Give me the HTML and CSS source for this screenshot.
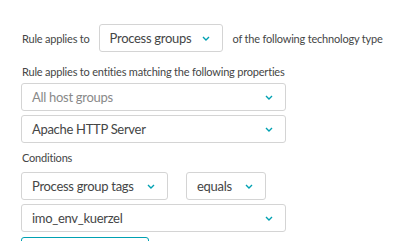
FILE: index.html
```html
<html>
<head>
  <link rel="stylesheet" href="styles.css">
</head>
<body>
<div class="rule">
  <div class="rule-type">
    <span class="label">Rule applies to</span>
    <div class="select select-type">
      <span>Process groups</span>
      <svg class="chevron" width="8" height="5" viewBox="0 0 8 5"><path d="M1 1l3 3 3-3" fill="none" stroke="#00a1b2" stroke-width="1.4"/></svg>
    </div>
    <span class="label">of the following technology type</span>
  </div>

  <div class="label section">Rule applies to entities matching the following properties</div>
  <div class="select select-wide placeholder">
    <span>All host groups</span>
    <svg class="chevron" width="8" height="5" viewBox="0 0 8 5"><path d="M1 1l3 3 3-3" fill="none" stroke="#00a1b2" stroke-width="1.4"/></svg>
  </div>
  <div class="select select-wide">
    <span>Apache HTTP Server</span>
    <svg class="chevron" width="8" height="5" viewBox="0 0 8 5"><path d="M1 1l3 3 3-3" fill="none" stroke="#00a1b2" stroke-width="1.4"/></svg>
  </div>

  <div class="label section section-conditions">Conditions</div>
  <div class="condition">
    <div class="select select-key">
      <span>Process group tags</span>
      <svg class="chevron" width="8" height="5" viewBox="0 0 8 5"><path d="M1 1l3 3 3-3" fill="none" stroke="#00a1b2" stroke-width="1.4"/></svg>
    </div>
    <div class="select select-op">
      <span>equals</span>
      <svg class="chevron" width="8" height="5" viewBox="0 0 8 5"><path d="M1 1l3 3 3-3" fill="none" stroke="#00a1b2" stroke-width="1.4"/></svg>
    </div>
  </div>
  <div class="select select-wide">
    <span>imo_env_kuerzel</span>
    <svg class="chevron" width="8" height="5" viewBox="0 0 8 5"><path d="M1 1l3 3 3-3" fill="none" stroke="#00a1b2" stroke-width="1.4"/></svg>
  </div>
  <div class="add-btn"></div>
</div>
</body>
</html>
```

FILE: styles.css
```css
body {
  margin: 0;
  font-family: Lato, 'Open Sans', sans-serif;
  color: #454646;
  background: #fff;
  overflow: hidden;
}

.rule {
  padding: 24px 0 0 21px;
}

.label {
  font-size: 11px;
  letter-spacing: -0.2px;
  white-space: nowrap;
}

.rule-type {
  display: flex;
  align-items: center;
}

.rule-type .label:first-child {
  margin-left: 1px;
}

.rule-type .select {
  flex-shrink: 0;
  margin: 0 10px 0 9px;
}

.section {
  height: 14px;
  line-height: 14px;
  margin: 13px 0 4px 1px;
}

.section-conditions {
  margin: 8px 0 7px 1px;
}

.select {
  display: flex;
  align-items: center;
  justify-content: space-between;
  box-sizing: border-box;
  height: 28px;
  padding: 0 12px 0 10px;
  border: 1px solid #d4d4d4;
  border-radius: 3px;
  font-size: 13px;
  letter-spacing: -0.3px;
  white-space: nowrap;
  background: #fff;
}

.chevron {
  flex-shrink: 0;
  margin-left: 10px;
}

.placeholder {
  color: #898989;
}

.select-type {
  width: 124px;
}

.select-wide {
  width: 265px;
  margin-bottom: 4px;
}

.condition {
  display: flex;
  gap: 18px;
  margin-bottom: 4px;
}

.select-key {
  width: 147px;
}

.select-op {
  width: 80px;
}

.add-btn {
  width: 128px;
  height: 20px;
  margin-top: 5px;
  border: 1px solid #00a1b2;
  border-radius: 3px;
  box-sizing: border-box;
}
```
